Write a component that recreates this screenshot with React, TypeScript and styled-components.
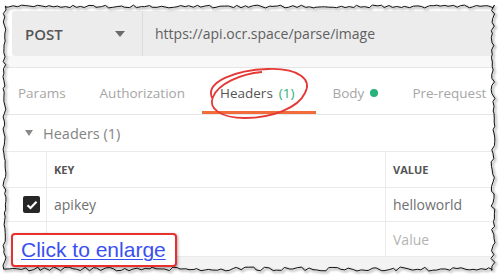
import React from "react";
import styled, { createGlobalStyle } from "styled-components";

const GlobalStyle = createGlobalStyle`
  html, body {
    margin: 0;
    padding: 0;
    background: #fff;
  }
`;

const Page = styled.div`
  position: relative;
  width: 500px;
  height: 279px;
  overflow: hidden;
  background: #fff;
  font-family: "Open Sans", "Liberation Sans", sans-serif;
`;

const RequestBar = styled.div`
  display: flex;
  height: 45px;
  padding: 11px 0 0 12px;
`;

const MethodSelect = styled.div`
  display: flex;
  align-items: center;
  justify-content: space-between;
  width: 131px;
  padding: 0 17px 0 13px;
  box-sizing: border-box;
  background: #ececec;
  border-radius: 3px 0 0 3px;
  border-right: 1px solid #dcdcdc;
  font-size: 15px;
  font-weight: 600;
  color: #555;
`;

const Caret = styled.span`
  width: 0;
  height: 0;
  border-left: 5px solid transparent;
  border-right: 5px solid transparent;
  border-top: 6px solid #6a6a6a;
`;

const UrlField = styled.div`
  flex: 1;
  display: flex;
  align-items: center;
  padding-left: 12px;
  background: #ececec;
  font-size: 14px;
  color: #606060;
`;

const Strip = styled.div`
  height: 11px;
  background: #f8f8f8;
  border-bottom: 1px solid #e6e6e6;
`;

const TabRow = styled.div`
  display: flex;
  height: 46px;
  padding-left: 1px;
  border-bottom: 1px solid #e6e6e6;
`;

const Tab = styled.div<{ $active?: boolean }>`
  display: flex;
  align-items: center;
  gap: 6px;
  padding: 3px ${(p) => (p.$active ? 21 : 17)}px 0 ${(p) => (p.$active ? 18 : 17)}px;
  font-size: 13.5px;
  white-space: nowrap;
  color: ${(p) => (p.$active ? "#555" : "#a6a6a6")};
  box-shadow: ${(p) => (p.$active ? "inset 0 -3px 0 #f26b3a" : "none")};
`;

const Count = styled.span`
  color: #2bb07b;
`;

const Dot = styled.span`
  width: 8px;
  height: 8px;
  border-radius: 50%;
  background: #26b27a;
`;

const SectionTitle = styled.div`
  display: flex;
  align-items: center;
  gap: 10px;
  height: 36px;
  padding-left: 25px;
  font-size: 14.5px;
  color: #848484;
`;

const Triangle = styled.span`
  width: 0;
  height: 0;
  border-left: 4px solid transparent;
  border-right: 4px solid transparent;
  border-top: 6px solid #888;
`;

const Table = styled.div`
  display: grid;
  grid-template-columns: 46px 339px 1fr;
  border-top: 1px solid #ebebeb;
`;

const Cell = styled.div<{ $h: number; $divider?: boolean; $head?: boolean; $muted?: boolean }>`
  display: flex;
  align-items: center;
  height: ${(p) => p.$h}px;
  padding-left: ${(p) => (p.$divider ? 7 : 23)}px;
  border-bottom: 1px solid #ebebeb;
  border-left: ${(p) => (p.$divider ? "1px solid #ebebeb" : "none")};
  font-size: ${(p) => (p.$head ? 11 : 14)}px;
  font-weight: ${(p) => (p.$head ? 700 : 400)};
  color: ${(p) => (p.$head ? "#555" : p.$muted ? "#b4b4b4" : "#707070")};
`;

const Checkbox = styled.span`
  display: flex;
  align-items: center;
  justify-content: center;
  width: 17px;
  height: 17px;
  border-radius: 2px;
  background: #262626;
`;

const Footer = styled.div`
  height: 30px;
  background: #f3f3f3;
`;

const EnlargeBox = styled.div`
  position: absolute;
  left: 11px;
  top: 233px;
  width: 166px;
  height: 34px;
  box-sizing: border-box;
  display: flex;
  align-items: center;
  padding-left: 8px;
  background: #fff;
  border: 2px solid #e8302f;
  border-radius: 4px;
  box-shadow: 1px 1px 3px rgba(0, 0, 0, 0.35);
`;

const EnlargeLink = styled.a`
  font-family: "Liberation Sans", Arial, sans-serif;
  font-size: 21px;
  color: #3a4ff2;
  text-decoration: underline;
  text-decoration-thickness: 1px;
  text-underline-offset: 2px;
`;

const Overlay = styled.svg`
  position: absolute;
  left: 0;
  top: 0;
  pointer-events: none;
`;

// jagged "torn paper" outline
const tornPath = () => {
  let seed = 7;
  const rnd = () => {
    seed = (seed * 16807) % 2147483647;
    return (seed % 1000) / 1000;
  };
  const pts: [number, number][] = [];
  for (let x = 4; x < 494; x += 4) pts.push([x + rnd() * 2, 5 + rnd() * 3]);
  for (let y = 5; y < 270; y += 4) pts.push([491 + rnd() * 4, y + rnd() * 2]);
  for (let x = 494; x > 4; x -= 4) pts.push([x - rnd() * 2, 267 + rnd() * 4]);
  for (let y = 270; y > 5; y -= 4) pts.push([3 + rnd() * 3, y - rnd() * 2]);
  return "M" + pts.map(([x, y]) => `${x.toFixed(1)} ${y.toFixed(1)}`).join("L") + "Z";
};

const TORN = tornPath();

const App = () => {
  return (
    <>
      <GlobalStyle />
      <Page>
        <RequestBar>
          <MethodSelect>
            POST
            <Caret />
          </MethodSelect>
          <UrlField>https://api.ocr.space/parse/image</UrlField>
        </RequestBar>
        <Strip />
        <TabRow>
          <Tab>Params</Tab>
          <Tab>Authorization</Tab>
          <Tab $active>
            Headers <Count>(1)</Count>
          </Tab>
          <Tab>
            Body <Dot />
          </Tab>
          <Tab>Pre-request</Tab>
        </TabRow>
        <SectionTitle>
          <Triangle />
          Headers (1)
        </SectionTitle>
        <Table>
          <Cell $h={35} />
          <Cell $h={35} $divider $head>KEY</Cell>
          <Cell $h={35} $divider $head>VALUE</Cell>

          <Cell $h={33}>
            <Checkbox>
              <svg width="12" height="10" viewBox="0 0 12 10">
                <path d="M1.5 5.2 L4.5 8 L10.5 1.8" stroke="#fff" strokeWidth="2.2" fill="none" />
              </svg>
            </Checkbox>
          </Cell>
          <Cell $h={33} $divider>apikey</Cell>
          <Cell $h={33} $divider>helloworld</Cell>

          <Cell $h={34} />
          <Cell $h={34} $divider />
          <Cell $h={34} $divider $muted>Value</Cell>
        </Table>
        <Footer />

        <Overlay width="500" height="279" viewBox="0 0 500 279">
          <path
            d="M212 98 C205 82 235 70 268 69 C300 68 312 80 305 93 C298 108 272 118 245 118 C220 118 208 108 213 97 C218 84 240 74 262 72"
            fill="none"
            stroke="#e53935"
            strokeWidth="1.8"
          />
          <defs>
            <filter id="blur">
              <feGaussianBlur stdDeviation="1" />
            </filter>
          </defs>
          <path d={`M0 0H500V279H0Z ${TORN}`} fill="#fff" fillRule="evenodd" />
          <path d={TORN} fill="none" stroke="#777" strokeWidth="2" opacity="0.5" filter="url(#blur)" transform="translate(1.5 1.5)" />
          <path d={TORN} fill="none" stroke="#111" strokeWidth="1" />
        </Overlay>

        <EnlargeBox>
          <EnlargeLink href="#">Click to enlarge</EnlargeLink>
        </EnlargeBox>
      </Page>
    </>
  );
};

export default App;
